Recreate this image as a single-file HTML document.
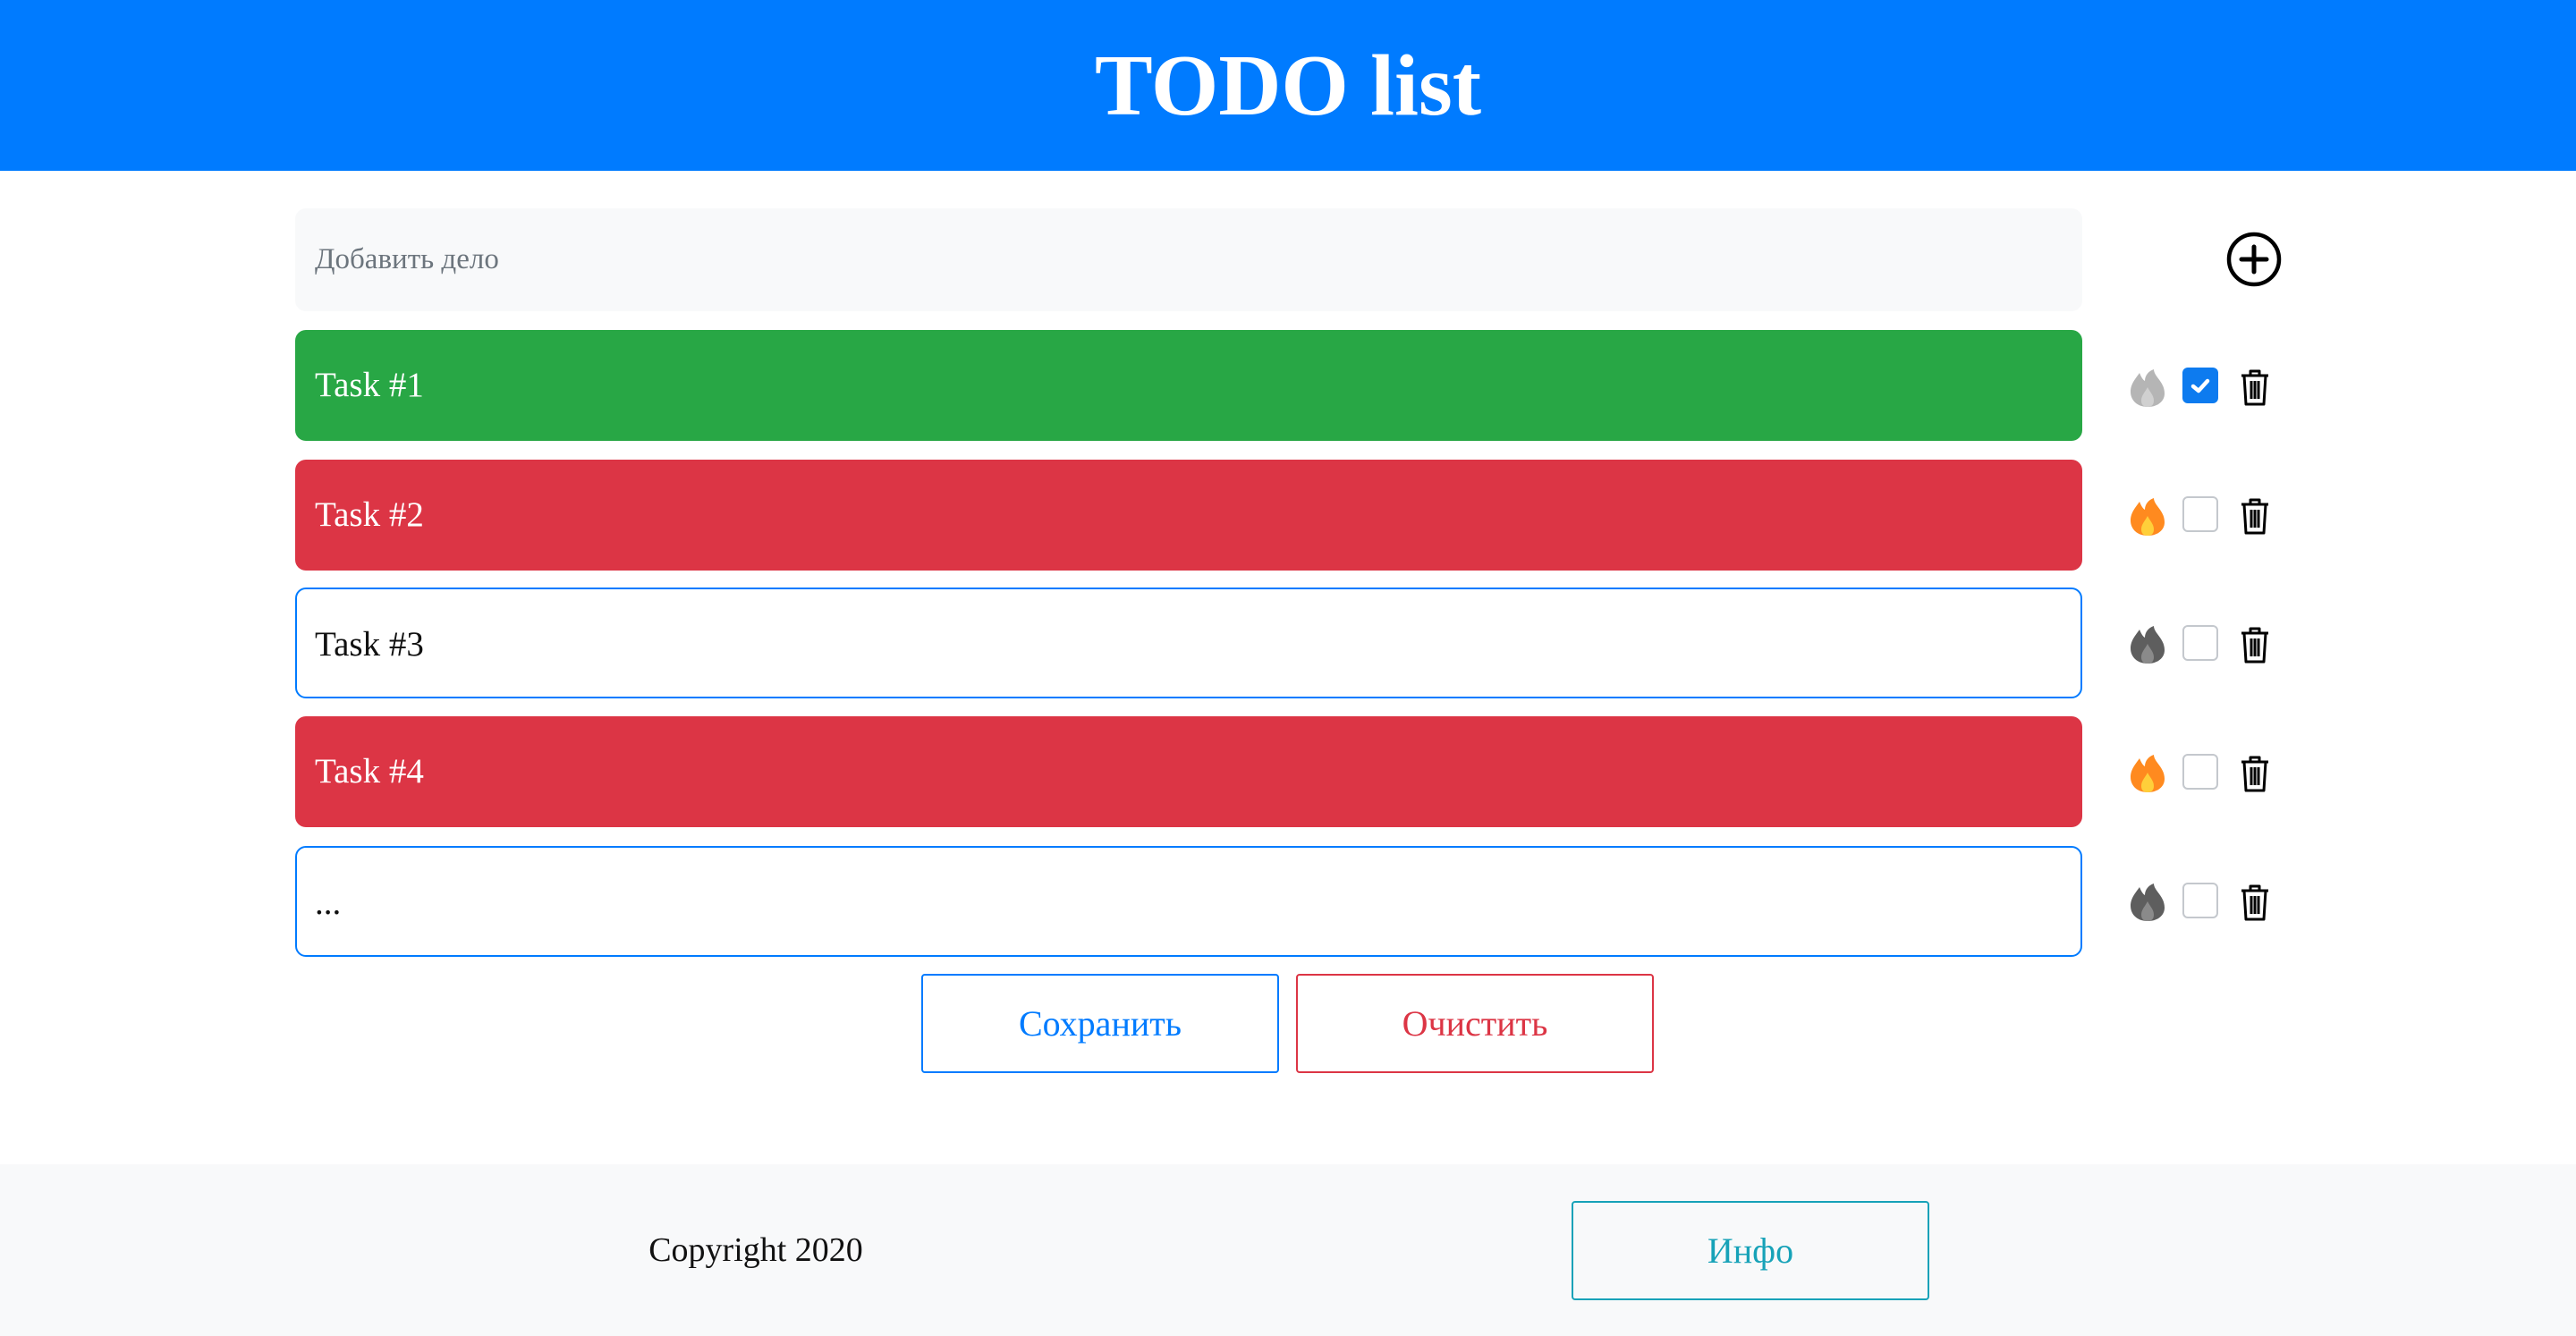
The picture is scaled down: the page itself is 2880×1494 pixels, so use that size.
<!DOCTYPE html>
<html><head><meta charset="utf-8"><style>
*{box-sizing:border-box;margin:0;padding:0}
body{width:2880px;height:1494px;overflow:hidden;background:#fff;font-family:"Liberation Serif",serif;position:relative}
.hdr{position:absolute;left:0;top:0;width:2880px;height:191px;background:#007bff;color:#fff;text-align:center;font-weight:bold;font-size:97px;line-height:191px}
.inp{position:absolute;left:330px;top:233px;width:1998px;height:115px;background:#f8f9fa;border-radius:12px;color:#6c757d;font-size:33px;line-height:115px;padding-left:22px}
.row{position:absolute;left:330px;width:1998px;height:124px;border-radius:12px;font-size:39px;line-height:124px;padding-left:22px}
.g{background:#28a745;color:#fff}.r{background:#dc3545;color:#fff}.w{background:#fff;border:2px solid #007bff;color:#111;padding-left:20px}
.ic{position:absolute}
.btn{position:absolute;height:111px;border:2px solid;border-radius:4px;text-align:center;font-size:40px;line-height:107px;background:transparent}
.foot{position:absolute;left:0;top:1302px;width:2880px;height:192px;background:#f8f9fa}
</style></head><body>
<div class="hdr">TODO list</div>
<div class="inp">Добавить дело</div>
<svg class="ic" style="left:2489px;top:259px" width="62" height="62" viewBox="0 0 62 62"><circle cx="31" cy="31" r="28" fill="none" stroke="#000" stroke-width="4.5"/><path d="M31 17v28M17 31h28" stroke="#000" stroke-width="5" stroke-linecap="round"/></svg>

<div class="row g" style="top:369px">Task #1</div>
<div class="row r" style="top:514px">Task #2</div>
<div class="row w" style="top:657px">Task #3</div>
<div class="row r" style="top:801px">Task #4</div>
<div class="row w" style="top:946px">...</div>

<svg width="0" height="0" style="position:absolute"><defs>
<symbol id="fl" viewBox="0 0 40 42"><path d="M20 42C9 42 1 35 1 25C1 16 7 10 11 4C13 9 15 12 17 13C17 7 21 2 27 0C27 8 39 14 39 27C39 36 31 42 20 42Z"/></symbol>
<symbol id="tr" viewBox="0 0 34 42"><path d="M2 8h30M12 8V3h10v5M5 8l2 32h20l2-32M13 14v20M17 14v20M21 14v20" fill="none" stroke="#000" stroke-width="3" stroke-linejoin="round"/></symbol>
</defs></svg>

<svg class="ic" style="left:2381px;top:413px" width="40" height="42"><use href="#fl" fill="#b5b5b5"/><path d="M20 42c-5 0-7-3-7-7 0-6 4-9 7-15 3 6 7 9 7 15 0 4-2 7-7 7z" fill="#d0d0d0"/></svg>
<div class="ic" style="left:2440px;top:411px;width:40px;height:40px;background:#0d7bef;border-radius:6px"></div>
<svg class="ic" style="left:2440px;top:411px" width="40" height="40"><path d="M12 21l6 5 10-11" fill="none" stroke="#fff" stroke-width="4.5" stroke-linecap="round" stroke-linejoin="round"/></svg>
<svg class="ic" style="left:2504px;top:412px" width="34" height="42"><use href="#tr"/></svg>

<svg class="ic" style="left:2381px;top:557px" width="40" height="42"><use href="#fl" fill="#ff8a1f"/><path d="M20 42c-5 0-7-3-7-7 0-6 4-9 7-15 3 6 7 9 7 15 0 4-2 7-7 7z" fill="#ffcf3a"/></svg>
<div class="ic" style="left:2440px;top:555px;width:40px;height:40px;border:2px solid #c4c8cd;border-radius:6px"></div>
<svg class="ic" style="left:2504px;top:556px" width="34" height="42"><use href="#tr"/></svg>

<svg class="ic" style="left:2381px;top:700px" width="40" height="42"><use href="#fl" fill="#5e5e5e"/><path d="M20 42c-5 0-7-3-7-7 0-6 4-9 7-15 3 6 7 9 7 15 0 4-2 7-7 7z" fill="#8a8a8a"/></svg>
<div class="ic" style="left:2440px;top:699px;width:40px;height:40px;border:2px solid #c4c8cd;border-radius:6px"></div>
<svg class="ic" style="left:2504px;top:700px" width="34" height="42"><use href="#tr"/></svg>

<svg class="ic" style="left:2381px;top:844px" width="40" height="42"><use href="#fl" fill="#ff8a1f"/><path d="M20 42c-5 0-7-3-7-7 0-6 4-9 7-15 3 6 7 9 7 15 0 4-2 7-7 7z" fill="#ffcf3a"/></svg>
<div class="ic" style="left:2440px;top:843px;width:40px;height:40px;border:2px solid #c4c8cd;border-radius:6px"></div>
<svg class="ic" style="left:2504px;top:844px" width="34" height="42"><use href="#tr"/></svg>

<svg class="ic" style="left:2381px;top:988px" width="40" height="42"><use href="#fl" fill="#5e5e5e"/><path d="M20 42c-5 0-7-3-7-7 0-6 4-9 7-15 3 6 7 9 7 15 0 4-2 7-7 7z" fill="#8a8a8a"/></svg>
<div class="ic" style="left:2440px;top:987px;width:40px;height:40px;border:2px solid #c4c8cd;border-radius:6px"></div>
<svg class="ic" style="left:2504px;top:988px" width="34" height="42"><use href="#tr"/></svg>

<div class="btn" style="left:1030px;top:1089px;width:400px;border-color:#007bff;color:#007bff">Сохранить</div>
<div class="btn" style="left:1449px;top:1089px;width:400px;border-color:#dc3545;color:#dc3545">Очистить</div>

<div class="foot">
<div style="position:absolute;left:645px;width:400px;top:71px;text-align:center;font-size:38px;line-height:50px;color:#111">Copyright 2020</div>
<div class="btn" style="left:1757px;top:41px;width:400px;border-color:#17a2b8;color:#17a2b8">Инфо</div>
</div>
</body></html>
